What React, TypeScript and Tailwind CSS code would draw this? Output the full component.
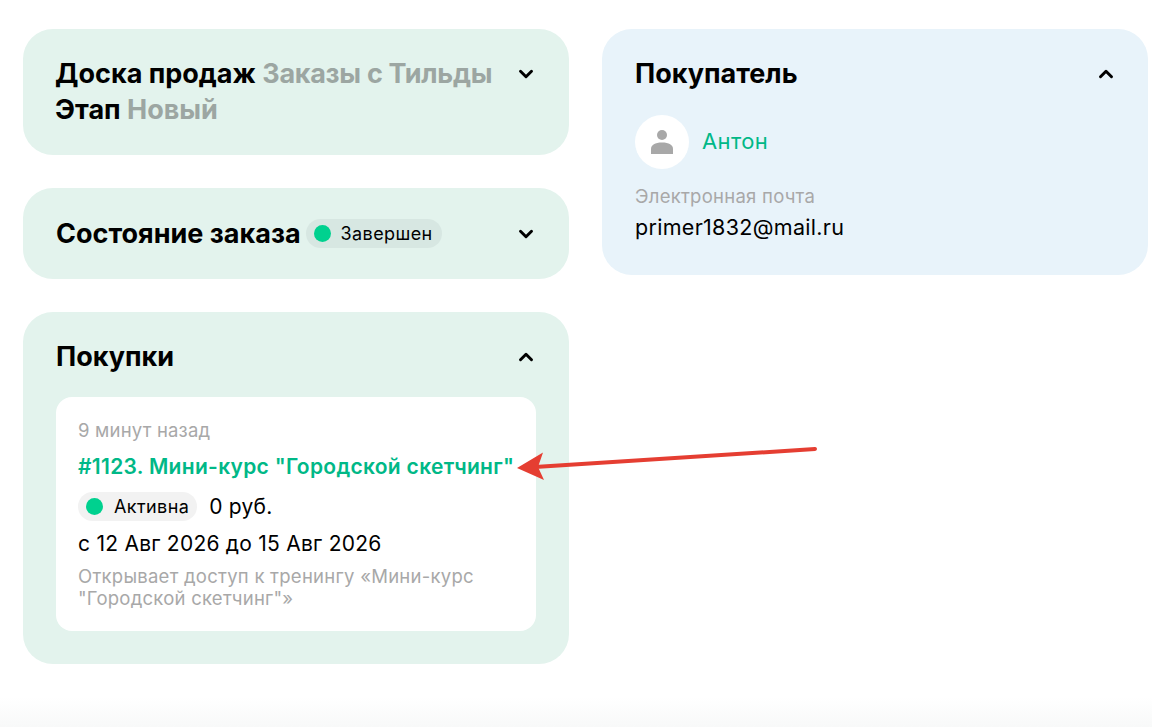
import React from 'react';
import { ChevronDown, ChevronUp } from 'lucide-react';

const font = "font-['Inter','Noto_Sans',sans-serif]";

function Toggle({ open }: { open?: boolean }) {
  const Icon = open ? ChevronUp : ChevronDown;
  return <Icon size={22} strokeWidth={3.2} className="text-black shrink-0" />;
}

function Dot() {
  return <span className="w-[17px] h-[17px] rounded-full bg-[#00d18f] shrink-0" />;
}

export default function App() {
  return (
    <div className={`${font} relative h-[727px] overflow-hidden bg-white pl-[23px] pt-[29px] text-black`}>
      <div className="flex gap-[33px] items-start">
        {/* Left column */}
        <div className="w-[546px] flex flex-col gap-[33px]">
          <section className="bg-[#e3f3ed] rounded-[30px] h-[126px] pl-[32px] pr-[32px] pt-[27px] flex justify-between">
            <h2 className="text-[27px] leading-[36px] font-bold">
              Доска продаж <span className="text-[#9ca6a2] tracking-[-0.3px]">Заказы с Тильды</span>
              <br />
              Этап <span className="text-[#9ca6a2]">Новый</span>
            </h2>
            <div className="pt-[7px]"><Toggle /></div>
          </section>

          <section className="bg-[#e3f3ed] rounded-[30px] h-[91px] pl-[33px] pr-[32px] flex items-center justify-between">
            <div className="flex items-center gap-[5px]">
              <h2 className="text-[27px] leading-[36px] font-bold">Состояние заказа</h2>
              <span className="h-[29px] flex items-center gap-[10px] rounded-full bg-[#d7e7e2] pl-[8px] pr-[9px] text-[18px] tracking-[0.4px]">
                <Dot />
                Завершен
              </span>
            </div>
            <Toggle />
          </section>

          <section className="bg-[#e3f3ed] rounded-[30px] h-[352px] pl-[33px] pr-[32px] pt-[27px]">
            <div className="flex items-center justify-between h-[36px]">
              <h2 className="text-[27px] leading-[36px] font-bold">Покупки</h2>
              <div className="-mt-[1px]"><Toggle open /></div>
            </div>
            <div className="mt-[22px] mr-[1px] bg-white rounded-[16px] h-[234px] px-[22px] pt-[21px]">
              <p className="text-[18.5px] leading-[24px] tracking-[0.2px] text-[#a8a8a8]">9 минут назад</p>
              <p className="mt-[12px] text-[21px] leading-[26px] font-semibold tracking-[0.3px] text-[#00b887] whitespace-nowrap">
                #1123. Мини-курс "Городской скетчинг"
              </p>
              <div className="mt-[12px] flex items-center gap-[12px]">
                <span className="h-[29px] flex items-center gap-[11px] rounded-full bg-[#f2f2f2] pl-[8px] pr-[8px] text-[18px] tracking-[0.4px]">
                  <Dot />
                  Активна
                </span>
                <span className="text-[21px] leading-[26px] tracking-[0.25px]">0 руб.</span>
              </div>
              <p className="mt-[10px] text-[21px] leading-[26px] tracking-[0.25px]">с 12 Авг 2026 до 15 Авг 2026</p>
              <p className="mt-[8px] text-[18.5px] leading-[22px] tracking-[0.25px] text-[#a8a8a8] whitespace-nowrap">
                Открывает доступ к тренингу «Мини-курс
                <br />
                "Городской скетчинг"»
              </p>
            </div>
          </section>
        </div>

        {/* Right column */}
        <section className="w-[546px] h-[246px] bg-[#e8f3fa] rounded-[30px] pl-[33px] pr-[31px] pt-[27px]">
          <div className="flex items-center justify-between h-[36px]">
            <h2 className="text-[27px] leading-[36px] font-bold">Покупатель</h2>
            <div className="-mt-[1px]"><Toggle open /></div>
          </div>
          <div className="mt-[23px] flex items-center gap-[13px]">
            <div className="w-[54px] h-[54px] rounded-full bg-white flex items-center justify-center">
              <svg width="22" height="26" viewBox="0 0 22 26" fill="#a8a8a8">
                <circle cx="11" cy="6" r="5" />
                <path d="M0 25v-5c0-4 4-6.500 11-6.500s11 2.500 11 6.500v5z" />
              </svg>
            </div>
            <span className="text-[22px] leading-[26px] tracking-[0.4px] text-[#00b887] -mt-[3px]">Антон</span>
          </div>
          <p className="mt-[15px] text-[18.5px] leading-[24px] tracking-[0.25px] text-[#a8a8a8]">Электронная почта</p>
          <p className="mt-[5px] text-[21.5px] leading-[28px] tracking-[0.3px]">primer1832@mail.ru</p>
        </section>
      </div>

      {/* annotation arrow */}
      <svg className="absolute left-[510px] top-[440px]" width="315" height="48" viewBox="510 440 315 48">
        <path d="M815 449L535 467" stroke="#e53e32" strokeWidth="4" strokeLinecap="round" fill="none" />
        <path d="M517 468L543 452.500L538 467L544 480z" fill="#e53e32" />
      </svg>

      <div className="absolute left-0 right-0 bottom-0 h-[30px] bg-gradient-to-b from-white to-[#f8f9f9]" />
    </div>
  );
}
